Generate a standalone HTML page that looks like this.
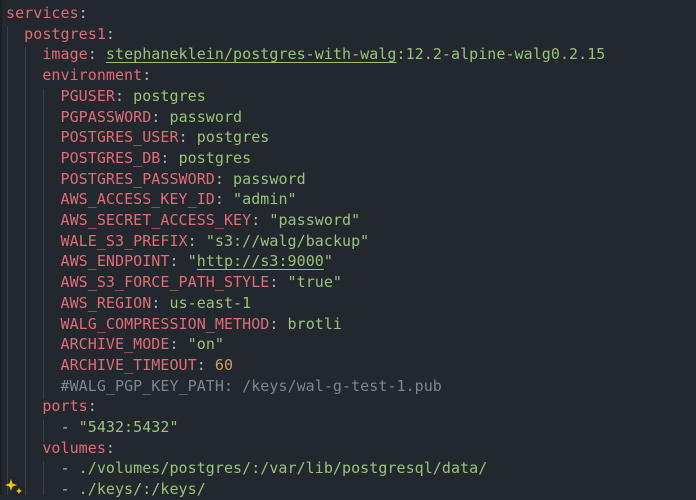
<!DOCTYPE html>
<html><head><style>
html,body{margin:0;padding:0;background:#23272e;width:696px;height:495px;overflow:hidden}
pre{margin:0;position:absolute;left:6px;top:3px;font-family:"DejaVu Sans Mono","Liberation Mono",monospace;font-size:15px;line-height:20.7px;color:#abb2bf;letter-spacing:0.05px}
.k{color:#e06c75}.s{color:#98c379}.c{color:#7f848e}.n{color:#d19a66}.p{color:#abb2bf}
.u{text-decoration:underline;text-decoration-color:#98c379;text-underline-offset:3px}
.g{position:absolute;width:1px;background:#3b4048}
.edge{position:absolute;left:0;top:0;width:2px;height:495px;background:#1b1e23}
</style></head><body>
<div class="edge"></div>
<div class="g" style="left:7px;top:26px;height:469px"></div>
<div class="g" style="left:25px;top:47px;height:448px"></div>
<div class="g" style="left:43px;top:89px;height:310px"></div>
<div class="g" style="left:43px;top:420px;height:22px"></div>
<div class="g" style="left:43px;top:461px;height:34px"></div>
<pre><span class="k">services</span><span class="p">:</span>
  <span class="k">postgres1</span>:
    <span class="k">image</span>: <span class="s"><span class="u">stephaneklein/postgres-with-walg</span>:12.2-alpine-walg0.2.15</span>
    <span class="k">environment</span>:
      <span class="k">PGUSER</span>: <span class="s">postgres</span>
      <span class="k">PGPASSWORD</span>: <span class="s">password</span>
      <span class="k">POSTGRES_USER</span>: <span class="s">postgres</span>
      <span class="k">POSTGRES_DB</span>: <span class="s">postgres</span>
      <span class="k">POSTGRES_PASSWORD</span>: <span class="s">password</span>
      <span class="k">AWS_ACCESS_KEY_ID</span>: <span class="s">"admin"</span>
      <span class="k">AWS_SECRET_ACCESS_KEY</span>: <span class="s">"password"</span>
      <span class="k">WALE_S3_PREFIX</span>: <span class="s">"s3://walg/backup"</span>
      <span class="k">AWS_ENDPOINT</span>: <span class="s">"<span class="u">http://s3:9000</span>"</span>
      <span class="k">AWS_S3_FORCE_PATH_STYLE</span>: <span class="s">"true"</span>
      <span class="k">AWS_REGION</span>: <span class="s">us-east-1</span>
      <span class="k">WALG_COMPRESSION_METHOD</span>: <span class="s">brotli</span>
      <span class="k">ARCHIVE_MODE</span>: <span class="s">"on"</span>
      <span class="k">ARCHIVE_TIMEOUT</span>: <span class="n">60</span>
      <span class="c">#WALG_PGP_KEY_PATH: /keys/wal-g-test-1.pub</span>
    <span class="k">ports</span>:
      - <span class="s">"5432:5432"</span>
    <span class="k">volumes</span>:
      - <span class="s">./volumes/postgres/:/var/lib/postgresql/data/</span>
      - <span class="s">./keys/:/keys/</span></pre>
<svg style="position:absolute;left:5px;top:478px" width="18" height="17" viewBox="0 0 18 17">
<path d="M6 1 L7.5 5.5 L12 7 L7.5 8.5 L6 13 L4.5 8.5 L0 7 L4.5 5.5Z" fill="#f2c811"/>
<path d="M14 10 L15 12 L17 13 L15 14 L14 16 L13 14 L11 13 L13 12Z" fill="#f2c811"/>
</svg>
</body></html>
